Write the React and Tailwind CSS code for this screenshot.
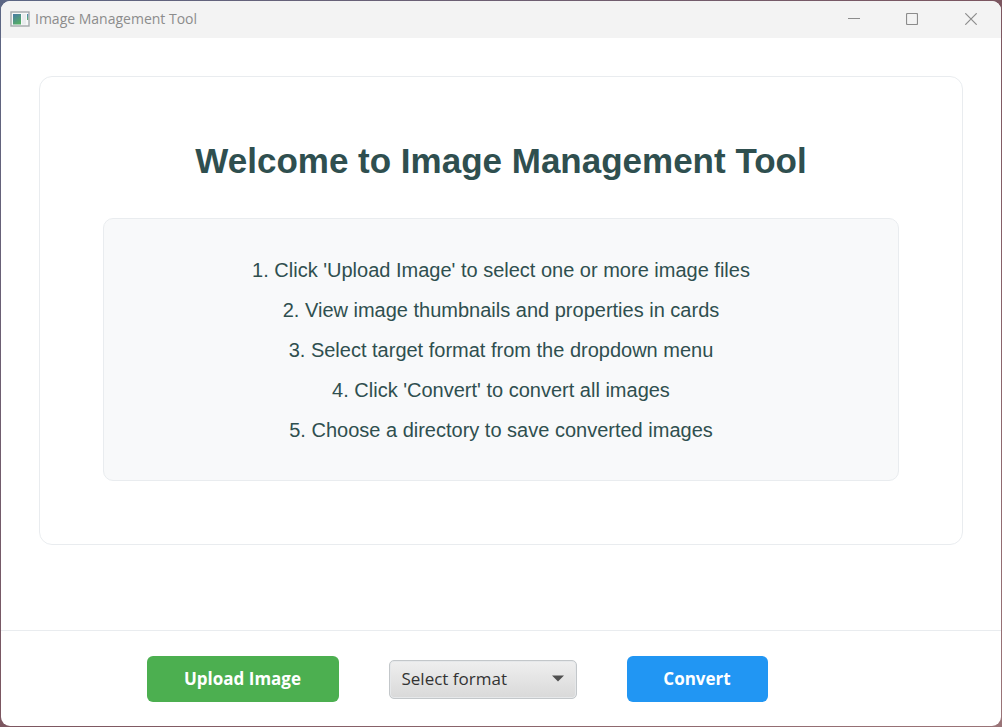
import React from "react";

const steps = [
  "1. Click 'Upload Image' to select one or more image files",
  "2. View image thumbnails and properties in cards",
  "3. Select target format from the dropdown menu",
  "4. Click 'Convert' to convert all images",
  "5. Choose a directory to save converted images",
];

function AppIcon() {
  return (
    <svg width="20" height="16" viewBox="0 0 20 16" aria-hidden="true">
      <defs>
        <linearGradient id="pane" x1="0" y1="0" x2="0.5" y2="1">
          <stop offset="0" stopColor="#4779a6" />
          <stop offset="1" stopColor="#55ac68" />
        </linearGradient>
        <linearGradient id="strip" x1="0" y1="0" x2="0" y2="1">
          <stop offset="0" stopColor="#4a86b8" />
          <stop offset="1" stopColor="#63b56c" />
        </linearGradient>
      </defs>
      <rect x="1" y="1" width="18" height="14" fill="#f7f8f9" stroke="#a3a8ac" strokeWidth="1.4" />
      <rect x="3" y="3" width="8" height="10.5" fill="url(#pane)" />
      <rect x="12" y="3" width="4" height="10.5" fill="#e9ecee" />
      <rect x="17" y="3" width="1.2" height="6" fill="url(#strip)" />
    </svg>
  );
}

function TitleBar() {
  return (
    <header className="flex h-[37px] shrink-0 items-center justify-between bg-[#f3f3f3] pb-0.5 pl-[9px] text-[#8c8c8c]">
      <div className="flex items-center gap-[5px]">
        <AppIcon />
        <span className="text-[14px] leading-5">Image Management Tool</span>
      </div>
      <div className="flex h-full">
        <button type="button" aria-label="Minimize" className="flex w-[58px] items-center justify-center">
          <svg width="12" height="12" viewBox="0 0 12 12">
            <path d="M0 5.5H12" stroke="currentColor" />
          </svg>
        </button>
        <button type="button" aria-label="Maximize" className="flex w-[58px] items-center justify-center">
          <svg width="12" height="12" viewBox="0 0 12 12">
            <rect x="0.5" y="0.5" width="11" height="11" rx="1" fill="none" stroke="currentColor" strokeWidth="1.2" />
          </svg>
        </button>
        <button type="button" aria-label="Close" className="flex w-[60px] items-center justify-center">
          <svg width="12" height="12" viewBox="0 0 12 12">
            <path d="M0.3 0.3L11.7 11.7M11.7 0.3L0.3 11.7" stroke="currentColor" strokeWidth="1.2" />
          </svg>
        </button>
      </div>
    </header>
  );
}

export default function App() {
  return (
    <div className="flex min-h-screen bg-linear-to-br from-[#5b6684] via-[#7c5660] to-[#9a7478] p-px font-['Open_Sans',sans-serif]">
      <div className="flex grow flex-col overflow-hidden rounded-[9px] bg-white">
        <TitleBar />
        <main className="grow px-[38px] pt-[38px] pb-10 text-center font-['Liberation_Sans',Arial,sans-serif] text-[#2f4f4f]">
          <section className="rounded-[13px] border border-[#e9ecef] px-[63px] pt-[61px] pb-[63px]">
            <h1 className="text-[35px] leading-[46px] font-bold">Welcome to Image Management Tool</h1>
            <ol className="mt-[34px] rounded-[10px] border border-[#e9ecef] bg-[#f8f9fa] px-8 pt-[31px] pb-[30px] text-[20px] leading-10">
              {steps.map((step) => (
                <li key={step}>{step}</li>
              ))}
            </ol>
          </section>
        </main>
        <footer className="flex items-center justify-center gap-[50px] border-t border-[#e9ecef] pt-[25px] pr-[88px] pb-6">
          <button type="button" className="h-[46px] w-[192px] rounded-md bg-[#4caf50] text-[17px] font-bold text-white">
            Upload Image
          </button>
          <div className="grid items-center">
            <select
              aria-label="Target format"
              defaultValue=""
              className="col-start-1 row-start-1 h-[39px] w-[188px] appearance-none rounded-[5px] border border-[#c3c7ca] bg-linear-to-b from-[#efefef] to-[#d9d9d9] pr-8 pl-3 text-[17px] text-[#333333] inset-shadow-[0_0_0_1px_#e6e8ea]"
            >
              <option value="" disabled hidden>Select format</option>
              <option value="png">PNG</option>
              <option value="jpg">JPG</option>
              <option value="gif">GIF</option>
              <option value="bmp">BMP</option>
            </select>
            <svg className="pointer-events-none col-start-1 row-start-1 mr-[13px] justify-self-end" width="12" height="8" viewBox="0 0 12 8" aria-hidden="true">
              <path d="M0 0.5H12L6 6.5Z" fill="#505050" />
            </svg>
          </div>
          <button type="button" className="h-[46px] w-[141px] rounded-md bg-[#2196f3] text-[17px] font-bold text-white">
            Convert
          </button>
        </footer>
      </div>
    </div>
  );
}
